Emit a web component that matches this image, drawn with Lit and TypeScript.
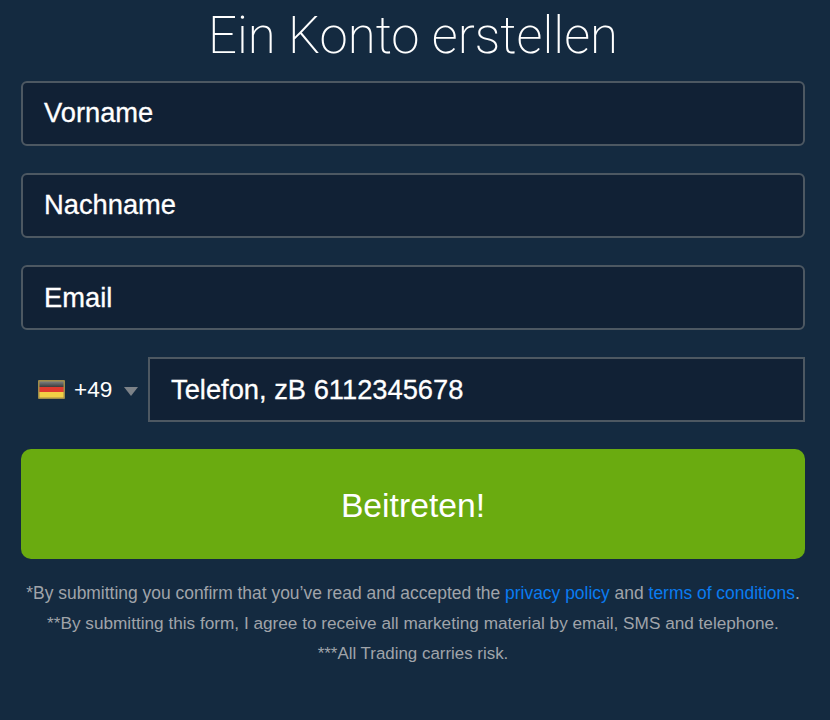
import { LitElement, html, css } from "lit";
import { customElement } from "lit/decorators.js";

@customElement("app-root")
export class AppRoot extends LitElement {
  static styles = css`
    :host {
      display: block;
      width: 830px;
      height: 720px;
      overflow: hidden;
      background: #142a40;
      font-family: "Liberation Sans", Arial, sans-serif;
      box-sizing: border-box;
    }
    .wrap {
      display: flex;
      flex-direction: column;
      padding: 0 25px 0 21px;
    }
    h1 {
      margin: 0;
      height: 80.6px;
      font-family: Roboto, sans-serif;
      font-weight: 200;
      font-size: 50.9px;
      line-height: 72px;
      color: #fff;
      text-align: center;
      white-space: nowrap;
    }
    .field {
      box-sizing: border-box;
      height: 65px;
      margin-bottom: 27.3px;
      background: #112135;
      border: 2px solid #4d5862;
      border-radius: 6px;
      padding: 0 21px;
      display: flex;
      align-items: center;
      color: #fff;
      font-size: 27.3px;
      -webkit-text-stroke: 0.3px #fff;
    }
    .phone {
      display: flex;
      height: 65px;
      margin-bottom: 26.5px;
    }
    .code {
      width: 127px;
      flex: none;
      display: flex;
      align-items: center;
      padding-left: 17px;
      box-sizing: border-box;
      color: #fff;
      font-size: 22.6px;
    }
    .flag {
      display: block;
      margin-right: 9px;
      flex: none;
    }
    .caret {
      width: 0;
      height: 0;
      margin-left: 12px;
      margin-top: 4px;
      border-left: 7px solid transparent;
      border-right: 7px solid transparent;
      border-top: 9px solid #7c8288;
    }
    .phone .field {
      flex: 1;
      margin: 0;
      border-radius: 0;
    }
    .submit {
      box-sizing: border-box;
      height: 110px;
      padding-top: 3px;
      margin: 0;
      background: #6aab10;
      border-radius: 10px;
      display: flex;
      align-items: center;
      justify-content: center;
      color: #fff;
      font-size: 33.7px;
    }
    .notes {
      margin: 18.6px 0 0;
      color: #a0a4aa;
      line-height: 30.6px;
      text-align: center;
      white-space: nowrap;
    }
    .first {
      font-size: 17.45px;
    }
    .second {
      font-size: 17.2px;
    }
    .third {
      font-size: 16.9px;
    }
    .notes a {
      color: #0a7cf0;
      text-decoration: none;
    }
  `;

  render() {
    return html`
      <div class="wrap">
        <h1>Ein Konto erstellen</h1>
        <div class="field">Vorname</div>
        <div class="field">Nachname</div>
        <div class="field">Email</div>
        <div class="phone">
          <div class="code">
            <svg class="flag" width="27" height="19" viewBox="0 0 27 19">
              <defs>
                <linearGradient id="g" x1="0" y1="0" x2="0" y2="1">
                  <stop offset="0" stop-color="#7d7f80" />
                  <stop offset="1" stop-color="#3c3c3c" />
                </linearGradient>
              </defs>
              <rect width="27" height="19" rx="1" fill="#a08c4a" />
              <rect x="1.5" y="1.5" width="24" height="5.5" fill="url(#g)" />
              <rect x="1.5" y="7" width="24" height="5" fill="#e03a2e" />
              <rect x="1.5" y="12" width="24" height="5.5" fill="#f2cf45" />
            </svg>
            <span>+49</span>
            <span class="caret"></span>
          </div>
          <div class="field">Telefon, zB 6112345678</div>
        </div>
        <div class="submit">Beitreten!</div>
        <div class="notes">
          <div class="first">*By submitting you confirm that you’ve read and accepted the <a>privacy policy</a> and <a>terms of conditions</a>.</div>
          <div class="second">**By submitting this form, I agree to receive all marketing material by email, SMS and telephone.</div>
          <div class="third">***All Trading carries risk.</div>
        </div>
      </div>
    `;
  }
}
